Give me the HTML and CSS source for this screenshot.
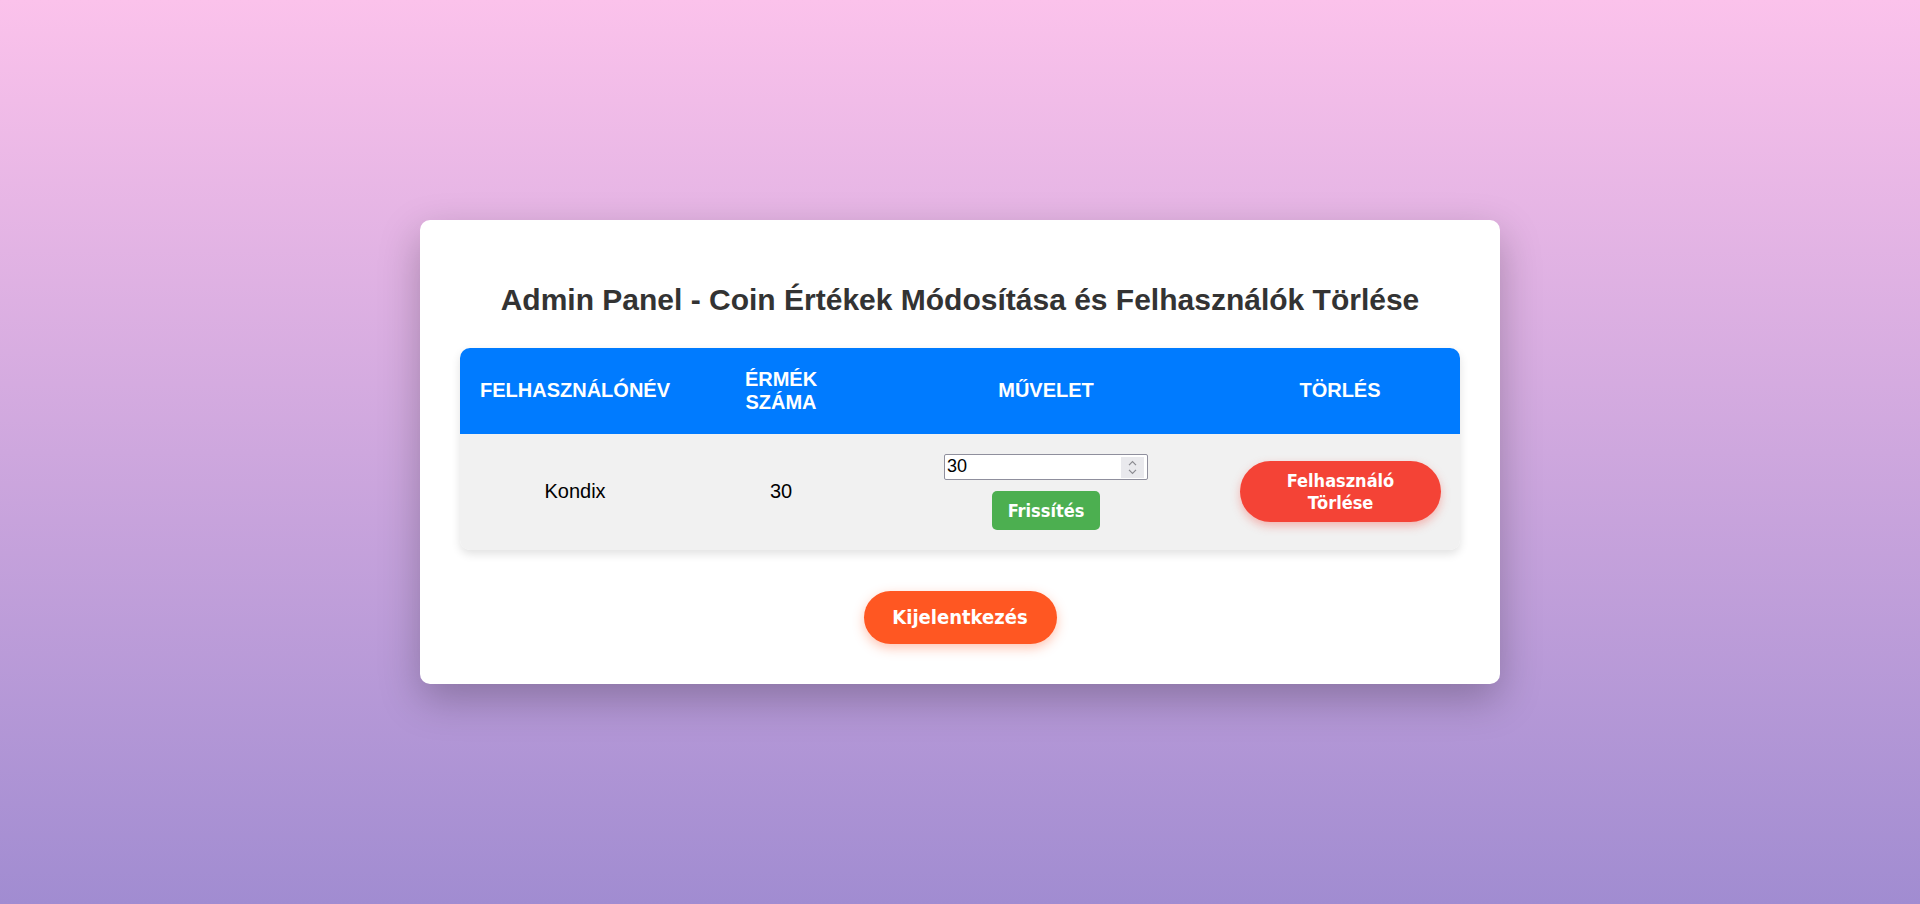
FILE: index.html
```html
<!DOCTYPE html>
<html lang="hu">
<head>
<meta charset="utf-8">
<title>Admin Panel</title>
<link rel="stylesheet" href="styles.css">
</head>
<body>
<div class="panel">
  <h2 class="title">Admin Panel - Coin Értékek Módosítása és Felhasználók Törlése</h2>
  <div class="table-wrap">
    <table class="users">
      <thead>
        <tr>
          <th class="c-user">Felhasználónév</th>
          <th class="c-coins">Érmék száma</th>
          <th class="c-action">Művelet</th>
          <th class="c-delete">Törlés</th>
        </tr>
      </thead>
      <tbody>
        <tr>
          <td>Kondix</td>
          <td>30</td>
          <td>
            <div class="update">
              <div class="num">
                <input class="num-input" type="text" value="30">
                <span class="spin"><svg width="23" height="21" viewBox="0 0 23 21"><path d="M8 8.2 L11.5 4.7 L15 8.2" fill="none" stroke="#8a8a90" stroke-width="1.2"/><path d="M8 12.8 L11.5 16.3 L15 12.8" fill="none" stroke="#8a8a90" stroke-width="1.2"/></svg></span>
              </div>
              <button class="btn btn-update">Frissítés</button>
            </div>
          </td>
          <td><button class="btn btn-delete">Felhasználó<br>Törlése</button></td>
        </tr>
      </tbody>
    </table>
  </div>
  <button class="btn btn-logout">Kijelentkezés</button>
</div>
</body>
</html>
```
FILE: styles.css
```css
html, body {
  margin: 0;
  padding: 0;
}

body {
  min-height: 100vh;
  display: flex;
  align-items: center;
  justify-content: center;
  background: linear-gradient(to top, #a18cd1 0%, #fbc2eb 100%);
  font-family: "Liberation Sans", Arial, sans-serif;
}

.panel {
  width: 1080px;
  box-sizing: border-box;
  padding: 40px;
  background: #ffffff;
  border-radius: 10px;
  box-shadow: 0 15px 40px rgba(0, 0, 0, 0.25);
  display: flex;
  flex-direction: column;
  align-items: center;
}

.title {
  margin: 23px 0 30px;
  font-size: 30px;
  font-weight: bold;
  color: #333333;
  text-align: center;
  line-height: 34.5px;
}

.table-wrap {
  width: 100%;
  border-radius: 10px;
  overflow: hidden;
  box-shadow: 0 4px 10px rgba(0, 0, 0, 0.12);
}

.users {
  width: 100%;
  border-collapse: collapse;
  table-layout: fixed;
}

.users th,
.users td {
  box-sizing: border-box;
  padding: 20px;
  text-align: center;
  vertical-align: middle;
  font-size: 20px;
  line-height: 23px;
}

.users th {
  background: #007bff;
  color: #ffffff;
  font-weight: bold;
  text-transform: uppercase;
}

.users td {
  background: #f1f1f1;
  color: #000000;
}

.c-user { width: 230px; }
.c-coins { width: 182px; }
.c-action { width: 348px; }
.c-delete { width: 240px; }

.update {
  display: flex;
  flex-direction: column;
  align-items: center;
  gap: 11px;
}

.num {
  position: relative;
  width: 204px;
  height: 26px;
}

.num-input {
  width: 100%;
  height: 100%;
  box-sizing: border-box;
  margin: 0;
  padding: 0 30px 0 2px;
  border: 1px solid #8f8f9d;
  border-radius: 2px;
  background: #ffffff;
  font-family: "Liberation Sans", Arial, sans-serif;
  font-size: 18px;
  color: #000000;
  outline: none;
}

.spin {
  position: absolute;
  top: 3px;
  right: 4px;
  width: 23px;
  height: 21px;
  background: #e9e9ed;
  display: block;
}

.spin svg {
  display: block;
}

.btn {
  font-family: "DejaVu Sans Condensed", "DejaVu Sans", Tahoma, sans-serif;
  font-weight: bold;
  color: #ffffff;
  border: none;
  margin: 0;
  cursor: pointer;
  padding: 0;
}

.btn-update {
  width: 108px;
  height: 39px;
  background: #4caf50;
  border-radius: 5px;
  font-size: 18px;
}

.btn-delete {
  width: 201px;
  height: 61px;
  background: #f44336;
  border-radius: 31px;
  font-size: 18px;
  line-height: 21.5px;
  box-shadow: 0 4px 10px rgba(244, 67, 54, 0.35);
}

.btn-logout {
  margin-top: 41px;
  width: 193px;
  height: 53px;
  background: #ff5722;
  border-radius: 27px;
  font-size: 20px;
  box-shadow: 0 4px 12px rgba(255, 87, 34, 0.35);
}
```
